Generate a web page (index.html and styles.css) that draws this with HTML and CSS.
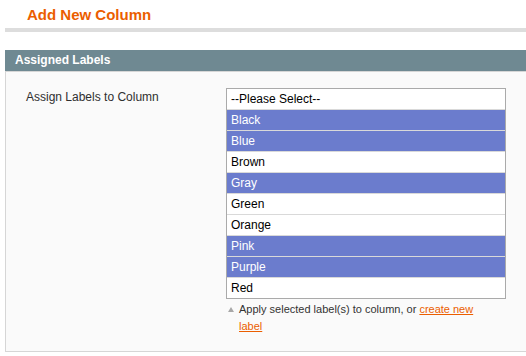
FILE: index.html
```html
<!DOCTYPE html>
<html>
<head>
  <meta charset="UTF-8">
  <title>Add New Column</title>
  <link rel="stylesheet" href="styles.css">
</head>
<body>
  <div class="content">
    <div class="content-header">
      <h3>Add New Column</h3>
    </div>

    <div class="entry-edit">
      <div class="entry-head">
        <h4>Assigned Labels</h4>
      </div>
      <div class="fieldset">
        <div class="form-row">
          <label class="form-label">Assign Labels to Column</label>
          <div class="form-value">
            <div class="multiselect">
              <div class="option">--Please Select--</div>
              <div class="option selected">Black</div>
              <div class="option selected">Blue</div>
              <div class="option">Brown</div>
              <div class="option selected">Gray</div>
              <div class="option">Green</div>
              <div class="option">Orange</div>
              <div class="option selected">Pink</div>
              <div class="option selected">Purple</div>
              <div class="option">Red</div>
            </div>
            <p class="note">Apply selected label(s) to column, or <a href="#">create new label</a></p>
          </div>
        </div>
      </div>
    </div>
  </div>
</body>
</html>
```

FILE: styles.css
```css
:root {
  --title-color: #eb5e00;
  --link-color: #eb5e00;
  --text-color: #2f2f2f;
  --head-bg: #6f8992;
  --fieldset-bg: #fafafa;
  --fieldset-border: #d6d6d6;
  --select-border: #aaaaaa;
  --option-border: #d9d9d9;
  --selected-bg: #6b7ccd;
}

html, body {
  overflow: hidden;
}

body {
  margin: 0;
  font-family: "Liberation Sans", Arial, sans-serif;
  font-size: 12px;
  color: var(--text-color);
  background: #ffffff;
}

.content {
  margin: 0 -2px 0 5px;
}

.content-header {
  padding: 6px 0 4px 22px;
  border-bottom: 4px solid #dddddd;
}

.content-header h3 {
  margin: 0;
  font-size: 15px;
  line-height: 18px;
  font-weight: bold;
  color: var(--title-color);
}

.entry-edit {
  margin-top: 18px;
}

.entry-head {
  background: var(--head-bg);
  height: 21px;
  padding-left: 10px;
}

.entry-head h4 {
  margin: 0;
  font-size: 12px;
  line-height: 21px;
  font-weight: bold;
  color: #ffffff;
}

.fieldset {
  background: var(--fieldset-bg);
  border: 1px solid var(--fieldset-border);
  padding: 16px 0 16px 20px;
}

.form-row {
  display: flex;
}

.form-label {
  width: 200px;
  margin-top: 2px;
  line-height: 15px;
}

.multiselect {
  width: 278px;
  border: 1px solid var(--select-border);
  background: #ffffff;
}

.option {
  height: 20px;
  line-height: 20px;
  padding-left: 4px;
  border-bottom: 1px solid var(--option-border);
  color: #000000;
}

.option:last-child {
  border-bottom: none;
}

.option.selected {
  background: var(--selected-bg);
  color: #ffffff;
}

.note {
  position: relative;
  width: 252px;
  margin: 2px 0 0;
  padding-left: 13px;
  font-size: 11px;
  line-height: 17px;
  color: #333333;
}

/* 小三角提示图标 */
.note::before {
  content: "";
  position: absolute;
  left: 2px;
  top: 6px;
  border-left: 3px solid transparent;
  border-right: 3px solid transparent;
  border-bottom: 5px solid #a8a8a8;
}

.note a {
  color: var(--link-color);
  text-decoration: underline;
}
```
